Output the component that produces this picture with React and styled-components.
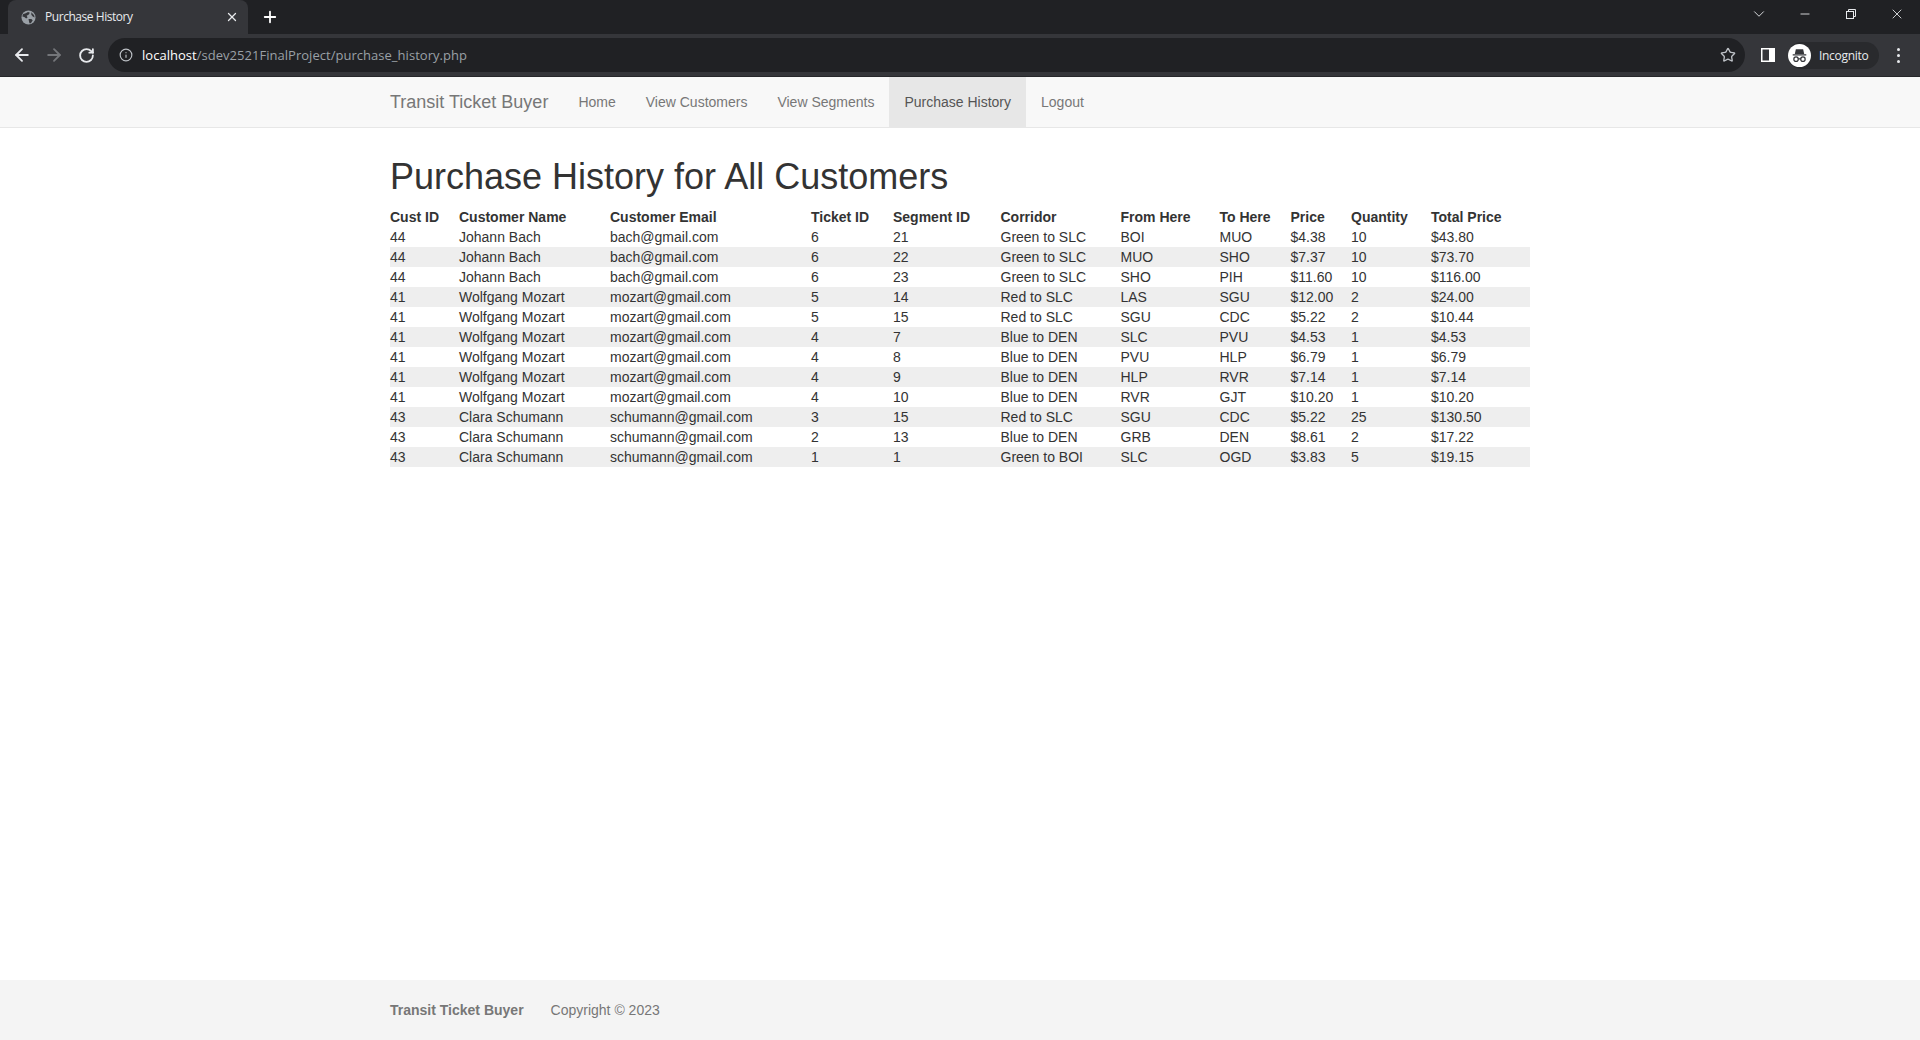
import React from "react";
import styled, { createGlobalStyle } from "styled-components";
import { ArrowLeft, ArrowRight, ChevronDown, Info, Minus, Plus, RotateCw, Star, X } from "lucide-react";

const GlobalStyle = createGlobalStyle`
  html, body {
    margin: 0;
    padding: 0;
    height: 100%;
    background: #fff;
    font-family: "Liberation Sans", Arial, sans-serif;
    font-size: 14px;
    color: #333;
  }
  #root {
    height: 100%;
  }
`;

const Page = styled.div`
  height: 1040px;
  display: flex;
  flex-direction: column;
  overflow: hidden;
`;

const TabStrip = styled.div`
  height: 34px;
  background: #202124;
  display: flex;
  align-items: flex-end;
  padding-left: 8px;
  color: #fff;
`;
const Tab = styled.div`
  width: 240px;
  height: 34px;
  box-sizing: border-box;
  background: #35363a;
  border-radius: 8px 8px 0 0;
  display: flex;
  align-items: center;
  padding: 0 9px 0 13px;
  gap: 9px;
  flex: none;
`;
const TabTitle = styled.span`
  flex: 1;
  font-family: "Open Sans", sans-serif;
  font-size: 12px;
  line-height: 16px;
  margin-top: -1px;
  letter-spacing: -0.45px;
  color: #e8eaed;
`;
const NewTab = styled.div`
  width: 28px;
  height: 34px;
  margin-left: 8px;
  display: flex;
  align-items: center;
  justify-content: center;
`;
const WindowControls = styled.div`
  margin-left: auto;
  height: 28px;
  align-self: flex-start;
  display: flex;
  align-items: center;
`;
const WindowButton = styled.div`
  width: 46px;
  height: 28px;
  display: flex;
  align-items: center;
  justify-content: center;
  color: #e8eaed;
`;

const Toolbar = styled.div`
  height: 42px;
  background: #35363a;
  border-bottom: 1px solid #26272a;
  display: flex;
  align-items: center;
`;
const NavIcons = styled.div`
  width: 108px;
  flex: none;
  display: flex;
  align-items: center;
  padding-left: 12px;
  gap: 12px;
  box-sizing: border-box;
`;
const ReloadButton = styled.div`
  width: 20px;
  display: flex;
  justify-content: center;
`;
const Omnibox = styled.div`
  flex: none;
  width: 1637px;
  height: 34px;
  border-radius: 17px;
  background: #202124;
  display: flex;
  align-items: center;
  padding: 0 9px 0 11px;
  box-sizing: border-box;
`;
const Url = styled.div`
  margin-left: 9px;
  flex: 1;
  font-family: "Open Sans", sans-serif;
  font-size: 13px;
  letter-spacing: 0.03px;
  color: #9aa0a6;
`;
const Host = styled.span`
  color: #fff;
`;
const ToolIcons = styled.div`
  flex: 1;
  display: flex;
  align-items: center;
  padding-left: 16px;
`;
const Profile = styled.div`
  margin-left: 13px;
  width: 91px;
  height: 27px;
  box-sizing: border-box;
  border-radius: 14px;
  background: #292a2d;
  display: flex;
  align-items: center;
  gap: 8px;
  color: #e8eaed;
  font-family: "Open Sans", sans-serif;
  font-size: 12px;
  letter-spacing: -0.3px;
`;
const MenuDots = styled.div`
  margin-left: 18px;
  display: flex;
  flex-direction: column;
  gap: 3px;
`;
const Dot = styled.span`
  width: 3px;
  height: 3px;
  border-radius: 50%;
  background: #e8eaed;
`;

const Navbar = styled.nav`
  height: 50px;
  background: #f8f8f8;
  border-bottom: 1px solid #e7e7e7;
  flex: none;
`;
const Container = styled.div`
  width: 1140px;
  margin: 0 auto;
  display: flex;
  align-items: stretch;
  height: 100%;
`;
const Brand = styled.a`
  font-size: 18px;
  line-height: 50px;
  color: #777;
  margin-right: 15px;
`;
const NavLink = styled.a`
  padding: 0 15px;
  line-height: 50px;
  color: ${(p) => (p.$active ? "#555" : "#777")};
  background: ${(p) => (p.$active ? "#e7e7e7" : "transparent")};
`;

const Main = styled.main`
  width: 1140px;
  margin: 0 auto;
  flex: 1;
`;
const Title = styled.h1`
  margin: 29px 0 10px;
  font-size: 36px;
  line-height: 40px;
  font-weight: 500;
  color: #333;
`;
const Table = styled.table`
  width: 100%;
  table-layout: fixed;
  border-collapse: collapse;
  border-spacing: 0;
`;
const Th = styled.th`
  padding: 0;
  height: 20px;
  line-height: 20px;
  text-align: left;
  font-weight: 700;
  white-space: nowrap;
`;
const Td = styled.td`
  padding: 0;
  height: 20px;
  line-height: 20px;
  white-space: nowrap;
`;
const Row = styled.tr`
  background: ${(p) => (p.$striped ? "#eee" : "transparent")};
`;

const Footer = styled.footer`
  height: 60px;
  flex: none;
  background: #f4f4f4;
  color: #777;
`;
const FooterInner = styled.div`
  width: 1140px;
  height: 100%;
  margin: 0 auto;
  display: flex;
  align-items: center;
  gap: 27px;
`;
const FooterBrand = styled.strong`
  font-weight: 700;
`;

const columns = [
  ["Cust ID", 69],
  ["Customer Name", 151],
  ["Customer Email", 201],
  ["Ticket ID", 82],
  ["Segment ID", 107.5],
  ["Corridor", 120],
  ["From Here", 99],
  ["To Here", 71],
  ["Price", 60.5],
  ["Quantity", 80],
  ["Total Price", 99],
];

const bach = ["44", "Johann Bach", "bach@gmail.com"];
const mozart = ["41", "Wolfgang Mozart", "mozart@gmail.com"];
const clara = ["43", "Clara Schumann", "schumann@gmail.com"];

const rows = [
  [...bach, "6", "21", "Green to SLC", "BOI", "MUO", "$4.38", "10", "$43.80"],
  [...bach, "6", "22", "Green to SLC", "MUO", "SHO", "$7.37", "10", "$73.70"],
  [...bach, "6", "23", "Green to SLC", "SHO", "PIH", "$11.60", "10", "$116.00"],
  [...mozart, "5", "14", "Red to SLC", "LAS", "SGU", "$12.00", "2", "$24.00"],
  [...mozart, "5", "15", "Red to SLC", "SGU", "CDC", "$5.22", "2", "$10.44"],
  [...mozart, "4", "7", "Blue to DEN", "SLC", "PVU", "$4.53", "1", "$4.53"],
  [...mozart, "4", "8", "Blue to DEN", "PVU", "HLP", "$6.79", "1", "$6.79"],
  [...mozart, "4", "9", "Blue to DEN", "HLP", "RVR", "$7.14", "1", "$7.14"],
  [...mozart, "4", "10", "Blue to DEN", "RVR", "GJT", "$10.20", "1", "$10.20"],
  [...clara, "3", "15", "Red to SLC", "SGU", "CDC", "$5.22", "25", "$130.50"],
  [...clara, "2", "13", "Blue to DEN", "GRB", "DEN", "$8.61", "2", "$17.22"],
  [...clara, "1", "1", "Green to BOI", "SLC", "OGD", "$3.83", "5", "$19.15"],
];

const navItems = ["Home", "View Customers", "View Segments", "Purchase History", "Logout"];

const GlobeIcon = () => (
  <svg width="15" height="15" viewBox="0 0 16 16">
    <circle cx="8" cy="8" r="7.5" fill="#9aa0a6" />
    <path d="M2 4.5 5 3.5 7.5 2 9.5 3 8 5 6 6 7 8 5.5 9 3.5 7.5 1.5 7Z" fill="#35363a" />
    <path d="M8 9.5 11 9.5 12.5 11 10.5 14 9 14 8.5 12Z M11 2.5 14 5.5 14.5 8 12.5 7 11 5Z" fill="#35363a" />
  </svg>
);

const RestoreIcon = () => (
  <svg width="12" height="12" viewBox="0 0 12 12" fill="none" stroke="#e8eaed">
    <rect x="1.5" y="3.5" width="7" height="7" />
    <path d="M3.5 3.5V1.5H10.5V8.5H8.5" />
  </svg>
);

const SidePanelIcon = () => (
  <svg width="14" height="14" viewBox="0 0 14 14">
    <path d="M0 0H14V14H0Z M1.5 1.5V12.5H8V1.5Z" fill="#fff" fillRule="evenodd" />
  </svg>
);

const IncognitoIcon = () => (
  <svg width="23" height="23" viewBox="0 0 22 22">
    <circle cx="11" cy="11" r="11" fill="#fff" />
    <path d="M7.5 5H14.5L15.5 9.5H6.5Z M4.5 9.8H17.5V11H4.5Z" fill="#35363a" />
    <circle cx="7.7" cy="14.5" r="2.1" fill="none" stroke="#35363a" strokeWidth="1.2" />
    <circle cx="14.3" cy="14.5" r="2.1" fill="none" stroke="#35363a" strokeWidth="1.2" />
    <path d="M9.8 14.2H12.2" stroke="#35363a" strokeWidth="1.2" />
  </svg>
);

const App = () => (
  <Page>
    <GlobalStyle />
    <TabStrip>
      <Tab>
        <GlobeIcon />
        <TabTitle>Purchase History</TabTitle>
        <X size={14} color="#e8eaed" strokeWidth={2.2} />
      </Tab>
      <NewTab>
        <Plus size={18} color="#fff" strokeWidth={2.4} />
      </NewTab>
      <WindowControls>
        <WindowButton>
          <ChevronDown size={18} strokeWidth={1.2} />
        </WindowButton>
        <WindowButton>
          <Minus size={14} strokeWidth={1.5} />
        </WindowButton>
        <WindowButton>
          <RestoreIcon />
        </WindowButton>
        <WindowButton>
          <X size={16} strokeWidth={1.3} />
        </WindowButton>
      </WindowControls>
    </TabStrip>
    <Toolbar>
      <NavIcons>
        <ArrowLeft size={20} color="#e8eaed" strokeWidth={2.2} />
        <ArrowRight size={20} color="#74767a" strokeWidth={2.2} />
        <ReloadButton>
          <RotateCw size={17} color="#e8eaed" strokeWidth={2.6} />
        </ReloadButton>
      </NavIcons>
      <Omnibox>
        <Info size={14} color="#bdc1c6" />
        <Url>
          <Host>localhost</Host>/sdev2521FinalProject/purchase_history.php
        </Url>
        <Star size={16} color="#bdc1c6" strokeWidth={2} />
      </Omnibox>
      <ToolIcons>
        <SidePanelIcon />
        <Profile>
          <IncognitoIcon />
          Incognito
        </Profile>
        <MenuDots>
          <Dot />
          <Dot />
          <Dot />
        </MenuDots>
      </ToolIcons>
    </Toolbar>
    <Navbar>
      <Container>
        <Brand>Transit Ticket Buyer</Brand>
        {navItems.map((item) => (
          <NavLink key={item} $active={item === "Purchase History"}>
            {item}
          </NavLink>
        ))}
      </Container>
    </Navbar>
    <Main>
      <Title>Purchase History for All Customers</Title>
      <Table>
        <colgroup>
          {columns.map(([name, width]) => (
            <col key={name} style={{ width }} />
          ))}
        </colgroup>
        <thead>
          <tr>
            {columns.map(([name]) => (
              <Th key={name}>{name}</Th>
            ))}
          </tr>
        </thead>
        <tbody>
          {rows.map((row, i) => (
            <Row key={i} $striped={i % 2 === 1}>
              {row.map((cell, j) => (
                <Td key={j}>{cell}</Td>
              ))}
            </Row>
          ))}
        </tbody>
      </Table>
    </Main>
    <Footer>
      <FooterInner>
        <FooterBrand>Transit Ticket Buyer</FooterBrand>
        <span>Copyright © 2023</span>
      </FooterInner>
    </Footer>
  </Page>
);

export default App;
